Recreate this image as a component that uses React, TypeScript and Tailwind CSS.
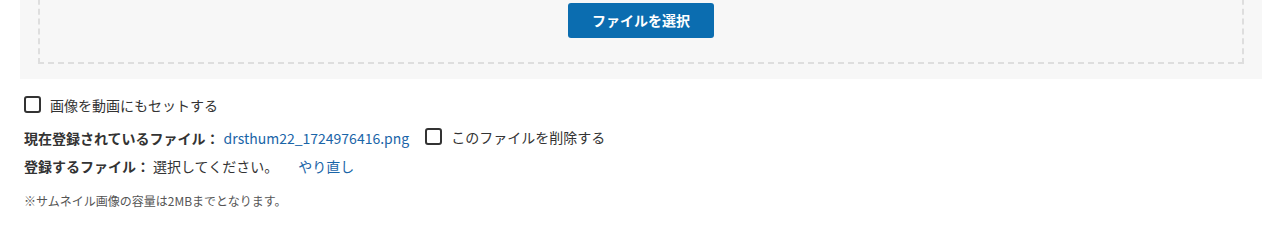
import React from "react";

const font = { fontFamily: '"Noto Sans CJK JP", "Noto Sans", sans-serif' };

function Check({ label }: { label: string }) {
  return (
    <label className="inline-flex items-center gap-[9px] cursor-pointer">
      <span className="w-[17px] h-[17px] rounded-[3px] border-2 border-[#333] bg-white" />
      <span>{label}</span>
    </label>
  );
}

export default function App() {
  return (
    <div className="bg-white text-[14px] text-[#333] overflow-hidden h-[224px]" style={font}>
      <div className="px-5">
        {/* アップロードエリア */}
        <div className="bg-[#f7f7f7] -mt-[39px] px-[18px] pt-[18px] pb-[15px]">
          <div className="border-2 border-dashed border-[#dedede] flex justify-center pt-[22px] pb-[24px]">
            <button className="w-[146px] h-[35px] rounded-[3px] bg-[#0b6db0] text-white font-bold text-[14px]">
              ファイルを選択
            </button>
          </div>
        </div>

        <div className="pl-1 pt-[17px] leading-[16px]">
          <Check label="画像を動画にもセットする" />
        </div>

        <div className="pl-1 pt-[13px] flex items-center leading-[16px]">
          <span className="font-bold">現在登録されているファイル：</span>
          <a href="#" className="text-[#1a65a8] ml-[4px]">drsthum22_1724976416.png</a>
          <span className="ml-4">
            <Check label="このファイルを削除する" />
          </span>
        </div>

        <div className="pl-1 pt-[11px] flex items-center leading-[16px]">
          <span className="font-bold">登録するファイル：</span>
          <span className="ml-[3px]">選択してください。</span>
          <a href="#" className="text-[#1a65a8] ml-5">やり直し</a>
        </div>

        <p className="pl-1 pt-[20px] text-[12px] text-[#555] leading-[14px]">
          ※サムネイル画像の容量は2MBまでとなります。
        </p>
      </div>
    </div>
  );
}
